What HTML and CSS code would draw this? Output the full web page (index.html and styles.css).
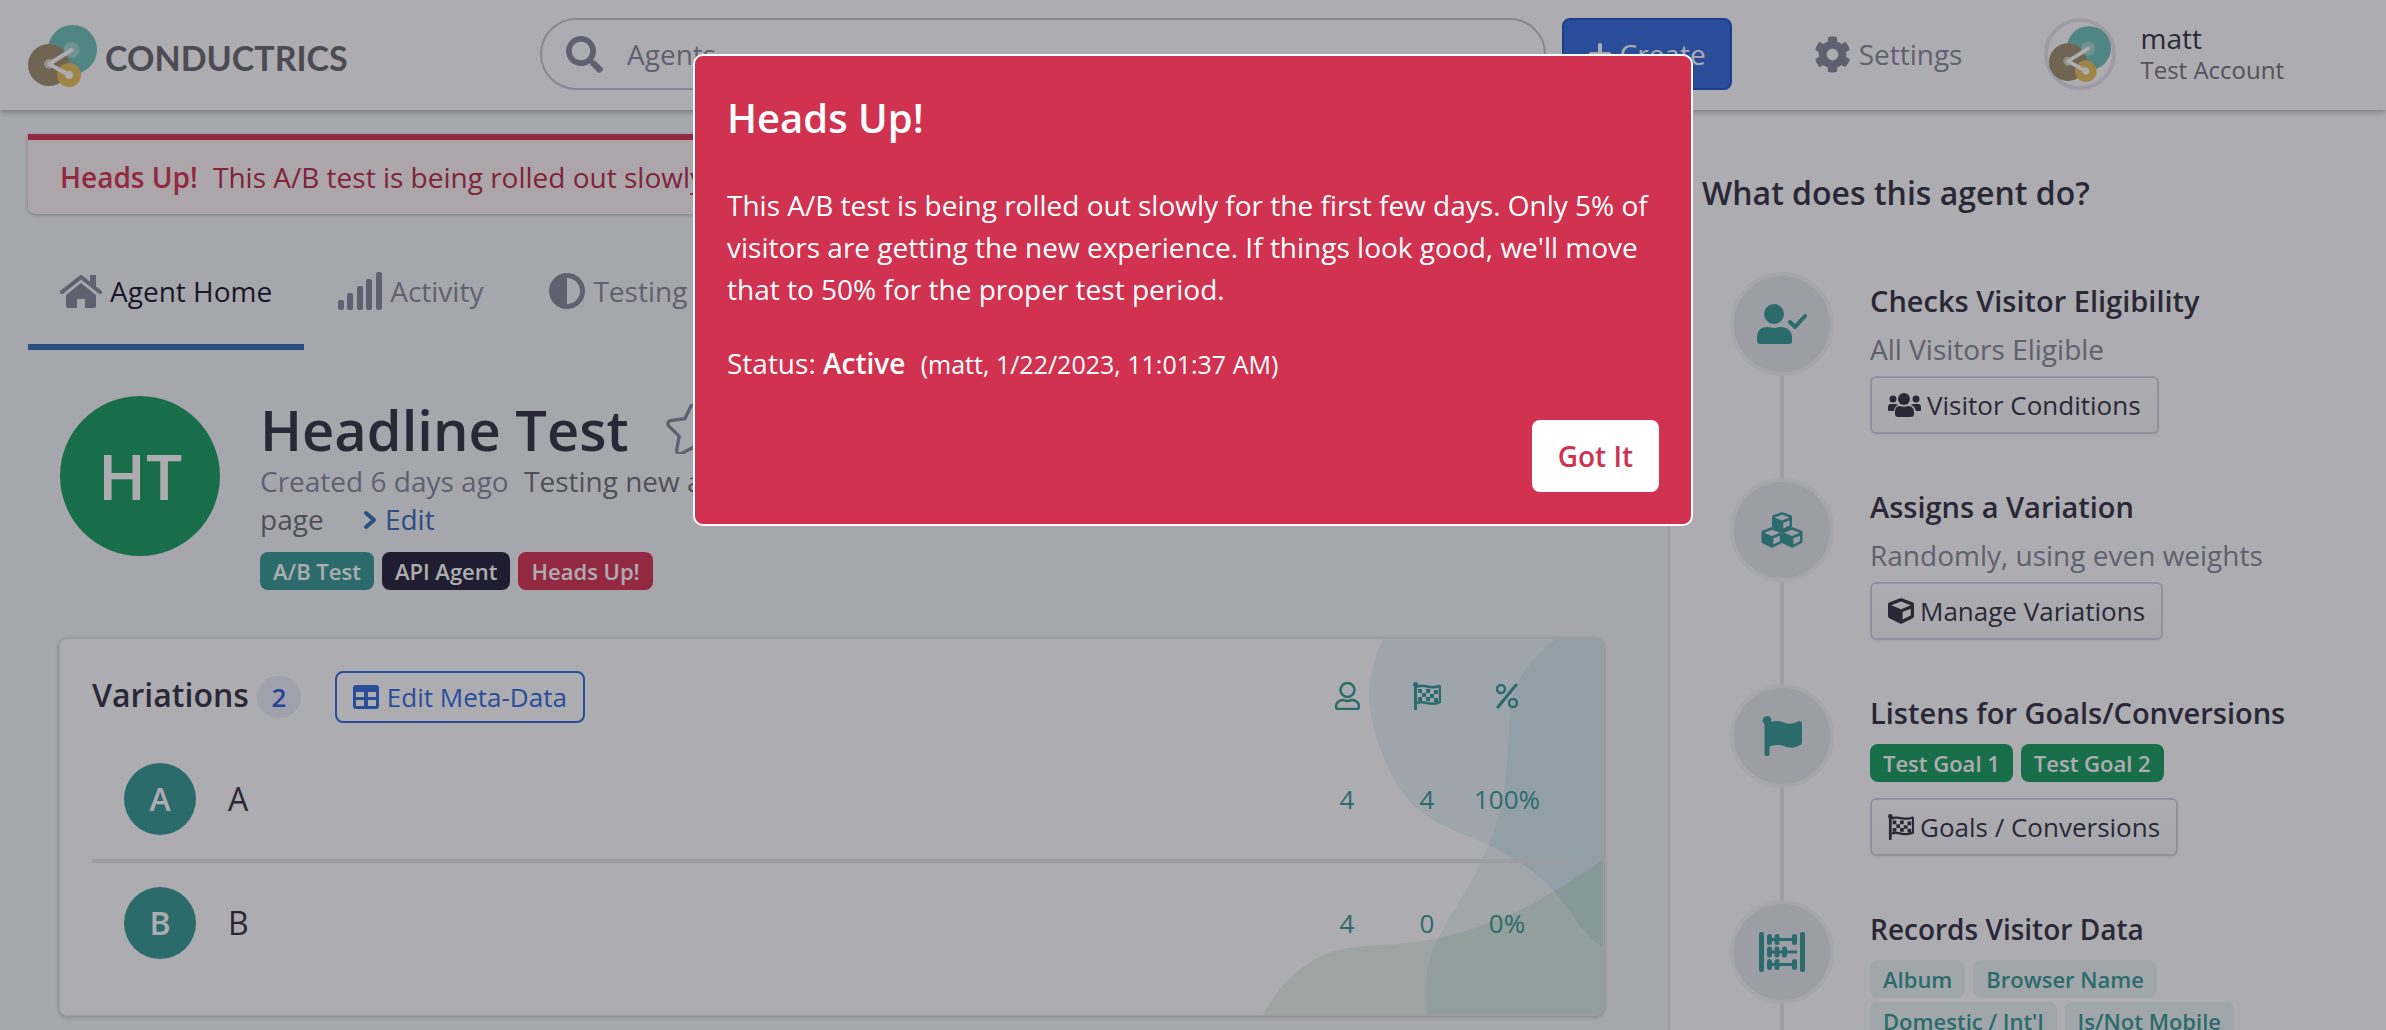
FILE: index.html
```html
<!DOCTYPE html>
<html lang="en">
<head>
    <meta charset="UTF-8">
    <meta name="viewport" content="width=device-width, initial-scale=1.0">
    <title>Headline Test - Conductrics</title>
    <link rel="stylesheet" href="styles.css">
</head>
<body>
    <!-- Shared icon shapes -->
    <svg class="sprite" aria-hidden="true">
        <symbol id="logo" viewBox="0 0 69 62">
            <circle cx="44.500" cy="24.500" r="24.500" fill="#6fc3b8"/>
            <circle cx="21" cy="40" r="21" fill="#a2926f"/>
            <circle cx="41" cy="50" r="12" fill="#eac25c"/>
            <circle cx="43.500" cy="25" r="8" fill="#fff" opacity=".35"/>
            <path d="M43.500 25 L21 39 L41 50" fill="none" stroke="#fff" stroke-width="4" stroke-linecap="round" stroke-linejoin="round"/>
            <circle cx="21" cy="39" r="5" fill="#fff" opacity=".6"/>
            <circle cx="41" cy="50" r="4" fill="#fff"/>
        </symbol>
        <symbol id="search" viewBox="0 0 512 512">
            <path d="M505 442.700L405.300 343c-4.500-4.500-10.600-7-17-7H372c27.600-35.300 44-79.700 44-128C416 93.100 322.900 0 208 0S0 93.100 0 208s93.100 208 208 208c48.300 0 92.700-16.400 128-44v16.300c0 6.400 2.500 12.500 7 17l99.700 99.700c9.400 9.400 24.600 9.400 33.900 0l28.300-28.300c9.400-9.400 9.400-24.600.1-34zM208 336c-70.700 0-128-57.200-128-128 0-70.700 57.200-128 128-128 70.700 0 128 57.200 128 128 0 70.700-57.200 128-128 128z"/>
        </symbol>
        <symbol id="plus" viewBox="0 0 24 24">
            <path d="M12 3v18M3 12h18" stroke="currentColor" stroke-width="4" stroke-linecap="round"/>
        </symbol>
        <symbol id="cog" viewBox="0 0 512 512">
            <path d="M487.4 315.7l-42.6-24.6c4.3-23.2 4.3-47 0-70.2l42.6-24.6c4.9-2.8 7.1-8.6 5.500-14-11.1-35.6-30-67.8-54.7-94.6-3.8-4.1-10-5.1-14.8-2.3L380.8 110c-17.9-15.4-38.500-27.3-60.8-35.1V25.8c0-5.6-3.9-10.500-9.4-11.7-36.7-8.2-74.3-7.8-109.2 0-5.500 1.2-9.4 6.1-9.4 11.7V75c-22.2 7.9-42.8 19.8-60.8 35.1L88.7 85.500c-4.9-2.8-11-1.9-14.8 2.3-24.7 26.7-43.6 58.9-54.7 94.6-1.7 5.4.6 11.2 5.500 14L67.3 221c-4.3 23.2-4.3 47 0 70.2l-42.6 24.6c-4.9 2.8-7.1 8.6-5.500 14 11.1 35.6 30 67.8 54.7 94.6 3.8 4.1 10 5.1 14.8 2.3l42.6-24.6c17.9 15.4 38.500 27.3 60.8 35.1v49.2c0 5.6 3.9 10.500 9.4 11.7 36.7 8.2 74.3 7.8 109.2 0 5.500-1.2 9.4-6.1 9.4-11.7v-49.2c22.2-7.9 42.8-19.8 60.8-35.1l42.6 24.6c4.9 2.8 11 1.9 14.8-2.3 24.7-26.7 43.6-58.9 54.7-94.6 1.500-5.500-.7-11.3-5.6-14.1zM256 336c-44.1 0-80-35.9-80-80s35.9-80 80-80 80 35.9 80 80-35.9 80-80 80z"/>
        </symbol>
        <symbol id="home" viewBox="0 0 42 34">
            <path d="M2 18 L21 3 L40 18" fill="none" stroke="currentColor" stroke-width="4" stroke-linecap="round" stroke-linejoin="round"/>
            <path d="M30 1h6v13l-6-5z"/>
            <path d="M21 9 L36 21 V32 q0 2-2 2 H25 V25 H17 V34 H8 q-2 0-2-2 V21z"/>
        </symbol>
        <symbol id="signal" viewBox="0 0 44 38">
            <rect x="0" y="28" width="6" height="10" rx="2"/>
            <rect x="9" y="21" width="6" height="17" rx="2"/>
            <rect x="19" y="14" width="6" height="24" rx="2"/>
            <rect x="28" y="7" width="6" height="31" rx="2"/>
            <rect x="38" y="0" width="6" height="38" rx="2"/>
        </symbol>
        <symbol id="adjust" viewBox="0 0 36 36">
            <path fill-rule="evenodd" d="M18 0a18 18 0 1 0 0 36a18 18 0 1 0 0-36zM18 5a13 13 0 0 1 0 26z"/>
        </symbol>
        <symbol id="star" viewBox="0 0 576 512">
            <path d="M528 171L382 150 317 18c-12-24-46-24-58 0L194 150 48 171c-26 4-37 36-18 55l106 103-25 145c-5 27 23 46 46 34l131-68 131 68c23 12 51-7 46-34l-25-145 106-103c19-19 8-51-18-55z" fill="none" stroke="currentColor" stroke-width="34"/>
        </symbol>
        <symbol id="chevron" viewBox="0 0 14 20">
            <path d="M3 3l8 7-8 7" fill="none" stroke="currentColor" stroke-width="4" stroke-linecap="round" stroke-linejoin="round"/>
        </symbol>
        <symbol id="table" viewBox="0 0 26 24">
            <path fill-rule="evenodd" d="M3 0h20q3 0 3 3v18q0 3-3 3H3q-3 0-3-3V3q0-3 3-3zM3 7v5h8V7zM15 7v5h8V7zM3 15v6h8v-6zM15 15v6h8v-6z"/>
        </symbol>
        <symbol id="user" viewBox="0 0 25 28">
            <circle cx="12.500" cy="8" r="7" fill="none" stroke="currentColor" stroke-width="2.500"/>
            <path d="M8 18c2 0 3 1 4.500 1S15 18 17 18c4 0 7 3 7 6.500 0 1.500-1 2.500-2 2.500H3c-1 0-2-1-2-2.500C1 21 4 18 8 18z" fill="none" stroke="currentColor" stroke-width="2.500"/>
        </symbol>
        <symbol id="checkered" viewBox="0 0 28 28">
            <circle cx="2.500" cy="2.500" r="2.500"/>
            <rect x="1" y="3" width="3" height="25" rx="1"/>
            <path d="M4 5c8-4 12 3 22-1 1 0 1 0 1 1v15c-9 5-15-2-23 1" fill="none" stroke="currentColor" stroke-width="2.500"/>
            <path d="M5 7h4v4H5zM13 7h4v4h-4zM21 8h4v4h-4zM9 11h4v4H9zM17 12h4v4h-4zM5 15h4v4H5zM13 15h4v4h-4zM21 16h4v4h-4z"/>
        </symbol>
        <symbol id="percent" viewBox="0 0 22 26">
            <path d="M20 2L2 24" fill="none" stroke="currentColor" stroke-width="3" stroke-linecap="round"/>
            <circle cx="5" cy="6" r="4" fill="none" stroke="currentColor" stroke-width="2.500"/>
            <circle cx="17" cy="20" r="4" fill="none" stroke="currentColor" stroke-width="2.500"/>
        </symbol>
        <symbol id="user-check" viewBox="0 0 50 40">
            <circle cx="17" cy="10" r="10"/>
            <path d="M10 23c3 0 4 1 7 1s4-1 7-1c6 0 11 4 11 10v4q0 3-3 3H3q-3 0-3-3v-4c0-6 4-10 10-10z"/>
            <path d="M33 18l5 5L48 12" fill="none" stroke="currentColor" stroke-width="4" stroke-linecap="round" stroke-linejoin="round"/>
        </symbol>
        <symbol id="users" viewBox="0 0 33 24">
            <circle cx="16" cy="6" r="6"/>
            <circle cx="5" cy="6" r="3.500"/>
            <circle cx="28" cy="6" r="3.500"/>
            <path d="M12 13c2 1 6 1 8 0 4 0 6 3 6 6v2q0 3-3 3H10q-3 0-3-3v-2c0-3 1-6 5-6z"/>
            <path d="M3 11h4q2 0 3 1c-3 1-4 4-4 6H1q-1 0-1-1v-3q0-3 3-3zM26 11h4q3 0 3 3v3q0 1-1 1h-4c-1-3-2-5-5-6q1-1 3-1z"/>
        </symbol>
        <symbol id="cube" viewBox="0 0 512 512">
            <path d="M239.1 6.3l-208 78c-18.7 7-31.1 25-31.1 45v225.1c0 18.2 10.3 34.8 26.500 42.9l208 104c13.500 6.8 29.4 6.8 42.9 0l208-104c16.3-8.1 26.500-24.8 26.500-42.9V129.3c0-20-12.4-37.9-31.1-44.9l-208-78C262 2.2 250 2.2 239.1 6.3zM256 68.4l192 72v1.1l-192 78-192-78v-1.1l192-72zm32 356V275.500l160-65v133.9l-160 80z"/>
        </symbol>
        <symbol id="cubes" viewBox="0 0 42 36">
            <use href="#cube" x="10" y="0" width="22" height="20"/>
            <use href="#cube" x="0" y="15" width="22" height="21"/>
            <use href="#cube" x="20" y="15" width="22" height="21"/>
        </symbol>
        <symbol id="flag" viewBox="0 0 512 512">
            <path d="M349.6 98.8C296 98.8 251.7 64 184.3 64c-25 0-47.3 4.4-68 12a56 56 0 0 0 3.600-23.600C118.100 24 94.800 1.200 66.300 0 34.300-1.200 8 24.300 8 56c0 19 9.500 35.800 24 46V488c0 13.300 10.700 24 24 24h16c13.300 0 24-10.700 24-24v-94.400c28.300-12 63.600-22 114.400-22 53.600 0 97.900 34.700 165.200 34.700 48.200 0 86.700-16.300 122.500-40.900C506.800 359.500 512 349.600 512 339V96c0-23.400-24.300-38.900-45.500-29-34.300 15.900-76.500 31.800-116.900 31.800z"/>
        </symbol>
        <symbol id="abacus" viewBox="0 0 46 40">
            <rect x="0" y="0" width="5" height="40" rx="2"/>
            <rect x="41" y="0" width="5" height="40" rx="2"/>
            <path d="M8 7.500h29M8 20h30M8 32.500h29" stroke="currentColor" stroke-width="3"/>
            <path d="M10.500 4.500v6M18 4.500v6M35.500 4.500v6M10.500 17v6M18 17v6M25.500 17v6M10.500 29.500v6M18 29.500v6M35.500 29.500v6" stroke="currentColor" stroke-width="5" stroke-linecap="round"/>
        </symbol>
    </svg>

    <header class="topbar">
        <a class="brand" href="#">
            <svg class="brand-mark"><use href="#logo"/></svg>
            <span>CONDUCTRICS</span>
        </a>
        <div class="search">
            <svg class="search-icon"><use href="#search"/></svg>
            <input type="text" aria-label="Search agents" placeholder="Agents">
        </div>
        <button type="button" class="create"><svg><use href="#plus"/></svg>Create</button>
        <a class="settings" href="#"><svg><use href="#cog"/></svg>Settings</a>
        <a class="account" href="#">
            <span class="account-pic"><svg><use href="#logo"/></svg></span>
            <span class="account-text">
                <span class="account-name">matt</span>
                <span class="account-org">Test Account</span>
            </span>
        </a>
    </header>

    <div class="layout">
        <main class="main">
            <div class="notice"><strong>Heads Up!</strong> This A/B test is being rolled out slowly for the first few days.</div>

            <nav class="tabs">
                <a class="tab active" href="#"><svg class="icon-home"><use href="#home"/></svg>Agent Home</a>
                <a class="tab" href="#"><svg class="icon-signal"><use href="#signal"/></svg>Activity</a>
                <a class="tab" href="#"><svg class="icon-adjust"><use href="#adjust"/></svg>Testing</a>
            </nav>

            <div class="content">
                <section class="agent">
                    <div class="agent-avatar">HT</div>
                    <div class="agent-info">
                        <h1>Headline Test <svg class="icon-star"><use href="#star"/></svg></h1>
                        <p class="agent-meta">
                            <span class="muted">Created 6 days ago</span>
                            <span>Testing new article<br>page</span>
                            <a href="#"><svg class="icon-chevron"><use href="#chevron"/></svg>Edit</a>
                        </p>
                        <div class="badges">
                            <span class="badge teal">A/B Test</span>
                            <span class="badge dark">API Agent</span>
                            <span class="badge red">Heads Up!</span>
                        </div>
                    </div>
                </section>

                <section class="card">
                    <svg class="card-art" viewBox="0 0 340 376" aria-hidden="true">
                        <path d="M120 0C100 40 104 75 118 111C126 132 132 145 143 158C165 185 195 192 226 206C262 223 285 243 302 266C318 288 325 299 340 308V0z" fill="#2b90dc" opacity=".1"/>
                        <path d="M292 0C276 14 264 26 256 41C247 58 247 75 246 94C243 130 243 150 236 174C232 190 226 206 219 221C206 249 192 268 176 298C163 322 160 345 164 376H340V0z" fill="#1f9a8c" opacity=".09"/>
                        <path d="M0 376C10 358 20 345 36 331C52 318 66 312 86 309C102 306 118 307 136 305C150 303 162 302 176 299C195 295 210 290 226 284C238 280 250 275 263 268C292 253 315 237 340 221V376z" fill="#3fa04a" opacity=".12"/>
                    </svg>
                    <table class="variations">
                        <thead>
                            <tr>
                                <th>
                                    <div class="card-head">
                                        <h2>Variations</h2>
                                        <span class="count">2</span>
                                        <button type="button" class="btn-outline"><svg class="icon-table"><use href="#table"/></svg>Edit Meta-Data</button>
                                    </div>
                                </th>
                                <th class="stat"><svg class="icon-user" role="img" aria-label="Visitors"><use href="#user"/></svg></th>
                                <th class="stat"><svg class="icon-goal" role="img" aria-label="Goals"><use href="#checkered"/></svg></th>
                                <th class="stat"><svg class="icon-percent" role="img" aria-label="Rate"><use href="#percent"/></svg></th>
                            </tr>
                        </thead>
                        <tbody>
                            <tr>
                                <td><div class="variation"><span class="letter">A</span>A</div></td>
                                <td class="stat">4</td>
                                <td class="stat">4</td>
                                <td class="stat">100%</td>
                            </tr>
                            <tr>
                                <td><div class="variation"><span class="letter">B</span>B</div></td>
                                <td class="stat">4</td>
                                <td class="stat">0</td>
                                <td class="stat">0%</td>
                            </tr>
                        </tbody>
                    </table>
                </section>
            </div>
        </main>

        <aside class="sidebar">
            <h2>What does this agent do?</h2>
            <ol class="timeline">
                <li>
                    <div class="rail"><span class="dot"><svg class="icon-check"><use href="#user-check"/></svg></span></div>
                    <div class="step">
                        <h3>Checks Visitor Eligibility</h3>
                        <p>All Visitors Eligible</p>
                        <button type="button" class="btn"><svg class="icon-users"><use href="#users"/></svg>Visitor Conditions</button>
                    </div>
                </li>
                <li>
                    <div class="rail"><span class="dot"><svg class="icon-cubes"><use href="#cubes"/></svg></span></div>
                    <div class="step">
                        <h3>Assigns a Variation</h3>
                        <p>Randomly, using even weights</p>
                        <button type="button" class="btn"><svg class="icon-cube"><use href="#cube"/></svg>Manage Variations</button>
                    </div>
                </li>
                <li>
                    <div class="rail"><span class="dot"><svg class="icon-flag"><use href="#flag"/></svg></span></div>
                    <div class="step">
                        <h3>Listens for Goals/Conversions</h3>
                        <div class="badges">
                            <span class="badge green">Test Goal 1</span>
                            <span class="badge green">Test Goal 2</span>
                        </div>
                        <button type="button" class="btn"><svg class="icon-cube"><use href="#checkered"/></svg>Goals / Conversions</button>
                    </div>
                </li>
                <li>
                    <div class="rail"><span class="dot"><svg class="icon-abacus"><use href="#abacus"/></svg></span></div>
                    <div class="step data">
                        <h3>Records Visitor Data</h3>
                        <div class="badges">
                            <span class="badge soft">Album</span>
                            <span class="badge soft">Browser Name</span>
                            <span class="badge soft">Domestic / Int'l</span>
                            <span class="badge soft">Is/Not Mobile</span>
                        </div>
                    </div>
                </li>
            </ol>
        </aside>
    </div>

    <div class="backdrop">
        <div class="modal" role="dialog" aria-modal="true" aria-labelledby="modalTitle">
            <h2 id="modalTitle">Heads Up!</h2>
            <p>This A/B test is being rolled out slowly for the first few days. Only 5% of visitors are getting the new experience. If things look good, we'll move that to 50% for the proper test period.</p>
            <p class="status">Status: <strong>Active</strong> <small>(matt, 1/22/2023, 11:01:37 AM)</small></p>
            <button type="button" id="gotIt">Got It</button>
        </div>
    </div>

    <script>
        document.getElementById('gotIt').addEventListener('click', () => {
            document.querySelector('.backdrop').style.display = 'none';
        });
    </script>
</body>
</html>
```

FILE: styles.css
```css
* {
    box-sizing: border-box;
}
html, body {
    height: 100%;
}
body {
    margin: 0;
    overflow: hidden;
    display: flex;
    flex-direction: column;
    font-family: "Open Sans", sans-serif;
    font-size: 28px;
    line-height: 38px;
    color: #363546;
    background-color: #f5f8fa;
}
h1, h2, h3, p, ol {
    margin: 0;
    padding: 0;
}
h1, h2, h3, strong {
    font-weight: 600;
}
button, input {
    font: inherit;
}
button {
    cursor: pointer;
}
a {
    text-decoration: none;
    color: inherit;
}
svg {
    fill: currentColor;
    flex: none;
}
.sprite {
    position: absolute;
    width: 0;
    height: 0;
}

/* Top bar */
.topbar {
    position: relative;
    flex: none;
    display: flex;
    align-items: center;
    height: 110px;
    padding: 0 102px 2px 28px;
    background: white;
    box-shadow: 0 2px 6px rgba(0,0,0,0.3);
}
.brand {
    display: flex;
    align-items: center;
    gap: 8px;
    width: 512px;
    padding-top: 4px;
    font-family: Lato, sans-serif;
    font-size: 34px;
    font-weight: 700;
    color: #6a6a70;
}
.brand span {
    padding-top: 4px;
}
.brand-mark {
    width: 69px;
    height: 62px;
}
.search {
    display: flex;
    align-items: center;
    flex: 1;
    height: 72px;
    padding: 0 24px;
    gap: 24px;
    border: 2px solid #c4c7d2;
    border-radius: 36px;
}
.search-icon {
    width: 37px;
    height: 37px;
    color: #8a8a9f;
}
.search input {
    flex: 1;
    border: 0;
    outline: 0;
    padding: 0;
    background: none;
}
.search input::placeholder {
    color: #8a8a9f;
    opacity: 1;
}
.create {
    display: flex;
    align-items: center;
    gap: 8px;
    height: 72px;
    margin-left: 16px;
    padding: 0 24px;
    border: 2px solid #2158c9;
    border-radius: 8px;
    background-color: #366ede;
    color: white;
}
.create svg {
    width: 24px;
    height: 24px;
}
.settings {
    display: flex;
    align-items: center;
    gap: 8px;
    margin-left: 82px;
    color: #8a8a9f;
}
.settings svg {
    width: 37px;
    height: 37px;
}
.account {
    display: flex;
    align-items: center;
    gap: 24px;
    margin-left: 82px;
}
.account-pic {
    display: flex;
    align-items: center;
    justify-content: center;
    width: 72px;
    height: 72px;
    border: 4px solid #e6e7ee;
    border-radius: 50%;
}
.account-pic svg {
    width: 62px;
    height: 56px;
}
.account-text {
    display: flex;
    flex-direction: column;
    line-height: 32px;
}
.account-org {
    font-size: 24px;
    color: #75757c;
}

/* Columns */
.layout {
    flex: 1;
    display: flex;
    min-height: 0;
}
.main {
    flex: 1;
    min-width: 0;
    padding: 24px 32px 0 28px;
}
.notice {
    height: 80px;
    padding: 18px 32px;
    border-top: 6px solid #d63653;
    border-radius: 0 0 8px 8px;
    background-color: #fdf5f6;
    color: #b82e4b;
    box-shadow: 0 1px 4px rgba(0,0,0,0.25);
    overflow: hidden;
    white-space: nowrap;
}
.notice strong {
    margin-right: 8px;
    color: #d63653;
}
.tabs {
    display: flex;
    gap: 2px;
    margin-top: 34px;
}
.tab {
    display: flex;
    align-items: center;
    gap: 8px;
    height: 102px;
    padding: 0 32px 10px;
    border-bottom: 6px solid transparent;
    color: #8a8a9f;
}
.tab.active {
    border-color: #366db8;
    color: #1c1b2d;
}
.tab svg {
    color: #8a8a9f;
}
.icon-home {
    width: 42px;
    height: 34px;
}
.icon-signal {
    width: 44px;
    height: 38px;
}
.icon-adjust {
    width: 36px;
    height: 36px;
}
.content {
    padding: 46px 32px 0;
}

/* Agent heading */
.agent {
    display: flex;
    gap: 40px;
}
.agent-avatar {
    display: flex;
    align-items: center;
    justify-content: center;
    flex: none;
    width: 160px;
    height: 160px;
    border-radius: 50%;
    background-color: #1da063;
    color: white;
    font-size: 64px;
    font-weight: 600;
}
.agent h1 {
    display: flex;
    align-items: center;
    gap: 36px;
    font-size: 56px;
    line-height: 66px;
}
.icon-star {
    width: 58px;
    height: 50px;
    color: #8a8a9f;
}
.agent-meta {
    color: #717179;
}
.agent-meta .muted {
    margin-right: 8px;
    color: #8a8a9f;
}
.agent-meta a {
    margin-left: 32px;
    color: #366db8;
}
.icon-chevron {
    width: 14px;
    height: 20px;
    margin-right: 8px;
}
.badges {
    display: flex;
    flex-wrap: wrap;
    gap: 4px 8px;
}
.badge {
    height: 38px;
    padding: 0 13px;
    border-radius: 8px;
    font-size: 22px;
    font-weight: 600;
    line-height: 38px;
    color: white;
}
.agent .badges {
    margin-top: 14px;
}
.teal {
    background-color: #399b96;
}
.dark {
    background-color: #25243a;
}
.red {
    background-color: #d63653;
}
.green {
    background-color: #1da063;
}
.soft {
    background-color: #edf6f6;
    color: #399b96;
}

/* Variations */
.card {
    position: relative;
    margin: 48px 0 0 -1px;
    padding: 32px;
    border: 1px solid #e6e6ee;
    border-radius: 8px;
    background-color: white;
    box-shadow: 0 1px 4px rgba(0,0,0,0.25);
    overflow: hidden;
}
.card-art {
    position: absolute;
    right: 0;
    top: 0;
    width: 340px;
    height: 376px;
}
.variations {
    position: relative;
    width: 100%;
    border-collapse: separate;
    border-spacing: 0;
}
.variations th,
.variations td {
    padding: 0;
    font-weight: 400;
    text-align: left;
}
.variations thead th {
    padding-bottom: 16px;
}
.variations .stat {
    width: 80px;
    font-size: 26px;
    text-align: center;
    color: #399b96;
}
.variations thead .stat {
    padding-bottom: 24px;
}
.variations .stat:last-child {
    width: 104px;
    padding-right: 24px;
}
.variations th svg {
    vertical-align: middle;
}
.card-head {
    display: flex;
    align-items: center;
    height: 52px;
}
.card-head h2 {
    padding-bottom: 4px;
    font-size: 32px;
}
.count {
    width: 44px;
    margin: 0 34px 0 8px;
    border-radius: 22px;
    background-color: #ebeffa;
    color: #2c62d6;
    font-size: 26px;
    font-weight: 600;
    line-height: 42px;
    text-align: center;
}
.btn-outline {
    display: flex;
    align-items: center;
    gap: 8px;
    height: 52px;
    padding: 0 16px;
    border: 2px solid #366ede;
    border-radius: 8px;
    background: none;
    color: #366ede;
    font-size: 26px;
}
.icon-table {
    width: 26px;
    height: 24px;
}
.icon-user {
    width: 25px;
    height: 28px;
}
.icon-goal {
    width: 28px;
    height: 28px;
}
.icon-percent {
    width: 22px;
    height: 26px;
}
.variations tbody td {
    height: 120px;
}
.variations tbody tr + tr td {
    height: 124px;
    border-top: 4px solid #e6e6ee;
}
.variation {
    display: flex;
    align-items: center;
    gap: 32px;
    padding-left: 32px;
    font-size: 32px;
}
.letter {
    width: 72px;
    border-radius: 50%;
    background-color: #399b96;
    color: white;
    font-weight: 600;
    line-height: 72px;
    text-align: center;
}

/* Sidebar */
.sidebar {
    flex: none;
    width: 718px;
    padding: 62px 64px 0 32px;
    border-left: 2px solid #e6e6ee;
    background-color: white;
}
.sidebar h2 {
    font-size: 32px;
    line-height: 42px;
}
.timeline {
    margin-top: 58px;
    padding-left: 28px;
    list-style: none;
}
.timeline li {
    display: flex;
    gap: 36px;
}
.rail {
    display: flex;
    flex-direction: column;
    align-items: center;
}
.rail::after {
    content: "";
    flex: 1;
    width: 4px;
    background-color: #e8e8ea;
}
.dot {
    display: flex;
    align-items: center;
    justify-content: center;
    width: 104px;
    height: 104px;
    border: 4px solid #f5f6f8;
    border-radius: 50%;
    background-color: #e6e8f0;
    color: #399b96;
}
.step {
    padding: 10px 0 44px;
}
.step h3 {
    margin-bottom: 10px;
    font-size: 29px;
}
.step.data h3 {
    font-size: 28px;
}
.step p {
    color: #8a8a9f;
}
.step .badges {
    margin-top: 12px;
}
.btn {
    display: flex;
    align-items: center;
    gap: 6px;
    height: 58px;
    margin-top: 8px;
    padding: 0 16px;
    border: 2px solid #d3d6e0;
    border-radius: 6px;
    background: linear-gradient(white, #f6f8fb);
    box-shadow: 0 2px 2px rgba(0,0,0,0.05);
    color: #363546;
    font-size: 26px;
}
.badges + .btn {
    margin-top: 16px;
}
.icon-check {
    width: 50px;
    height: 40px;
}
.icon-cubes {
    width: 42px;
    height: 36px;
}
.icon-flag {
    width: 40px;
    height: 40px;
}
.icon-abacus {
    width: 46px;
    height: 40px;
}
.icon-users {
    width: 33px;
    height: 24px;
}
.icon-cube {
    width: 26px;
    height: 26px;
}

/* Dialog */
.backdrop {
    position: fixed;
    inset: 0;
    padding-top: 54px;
    background-color: rgba(20,18,30,0.35);
}
.modal {
    display: flex;
    flex-direction: column;
    max-width: 1000px;
    margin: 0 auto;
    padding: 32px;
    border: 2px solid white;
    border-radius: 10px;
    background-color: #d03250;
    color: white;
    line-height: 42px;
}
.modal h2 {
    margin-bottom: 36px;
    font-size: 40px;
    line-height: 60px;
}
.modal .status {
    margin: 32px 0 35px;
}
.status small {
    margin-left: 8px;
    font-size: 25px;
}
.modal button {
    align-self: flex-end;
    height: 72px;
    padding: 0 26px;
    border: 0;
    border-radius: 8px;
    background-color: white;
    color: #d03250;
    font-weight: 600;
}
```
